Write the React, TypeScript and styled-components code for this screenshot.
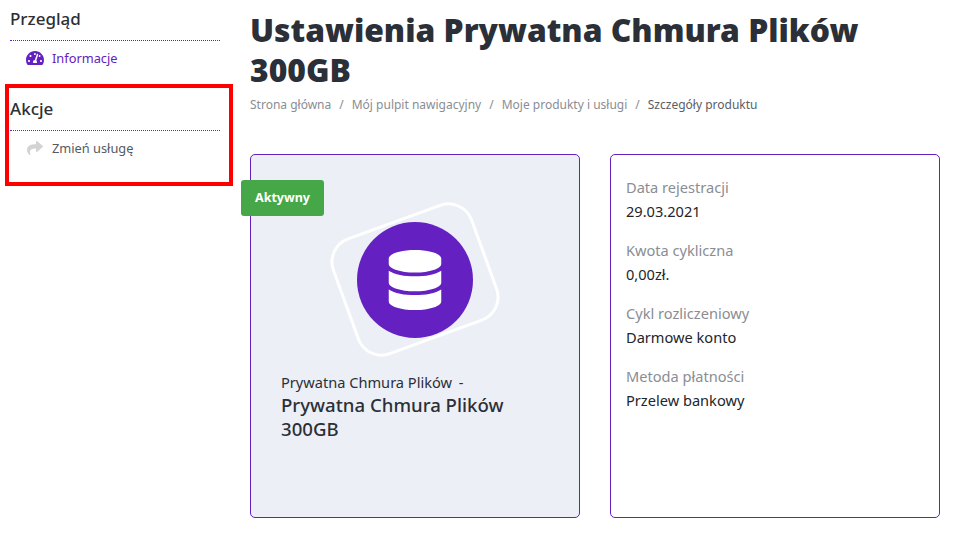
import { FaDatabase, FaShare, FaTachometerAlt } from 'react-icons/fa';
import styled, { createGlobalStyle } from 'styled-components';

const details = [
  { label: 'Data rejestracji', value: '29.03.2021' },
  { label: 'Kwota cykliczna', value: '0,00zł.' },
  { label: 'Cykl rozliczeniowy', value: 'Darmowe konto' },
  { label: 'Metoda płatności', value: 'Przelew bankowy' },
];

const crumbs = ['Strona główna', 'Mój pulpit nawigacyjny', 'Moje produkty i usługi'];

export default function App(): React.ReactElement {
  return (
    <Page>
      <GlobalStyle />
      <Sidebar>
        <SideSection>
          <SideTitle>Przegląd</SideTitle>
          <SideLink $active>
            <FaTachometerAlt size={18} className="icon" />
            Informacje
          </SideLink>
        </SideSection>
        <SideSection>
          <SideTitle>Akcje</SideTitle>
          <SideLink>
            <FaShare size={16} className="icon" />
            Zmień usługę
          </SideLink>
        </SideSection>
        <Highlight />
      </Sidebar>
      <Main>
        <Heading>Ustawienia Prywatna Chmura Plików 300GB</Heading>
        <Breadcrumb>
          {crumbs.map((crumb) => (
            <Crumb key={crumb}>
              {crumb}
              <Slash>/</Slash>
            </Crumb>
          ))}
          <Current>Szczegóły produktu</Current>
        </Breadcrumb>
        <Cards>
          <ProductCard>
            <Badge>Aktywny</Badge>
            <IconWrap>
              <Frame />
              <Circle>
                <FaDatabase size={60} />
              </Circle>
            </IconWrap>
            <ProductGroup>
              Prywatna Chmura Plików <Dash>-</Dash>
            </ProductGroup>
            <ProductName>Prywatna Chmura Plików 300GB</ProductName>
          </ProductCard>
          <InfoCard>
            {details.map((item) => (
              <InfoItem key={item.label}>
                <InfoLabel>{item.label}</InfoLabel>
                <InfoValue>{item.value}</InfoValue>
              </InfoItem>
            ))}
          </InfoCard>
        </Cards>
      </Main>
    </Page>
  );
}

const GlobalStyle = createGlobalStyle`
  body {
    margin: 0;
    background: #fff;
    font-family: "Noto Sans", "Open Sans", sans-serif;
    color: #2b2f38;
  }
`;

const Page = styled.div`
  display: flex;
  align-items: flex-start;
  width: 959px;
  height: 547px;
  overflow: hidden;
`;

const Sidebar = styled.aside`
  position: relative;
  flex: 0 0 250px;
  padding: 6px 30px 0 10px;
  box-sizing: border-box;
`;

const Highlight = styled.div`
  position: absolute;
  left: 5px;
  top: 84px;
  width: 228px;
  height: 102px;
  box-sizing: border-box;
  border: 4px solid #fe0000;
  pointer-events: none;
`;

const SideSection = styled.section`
  margin-bottom: 21px;
`;

const SideTitle = styled.h3`
  margin: 0;
  height: 34px;
  line-height: 26px;
  font-size: 17px;
  font-weight: 500;
  color: #2b2f38;
  border-bottom: 1px dotted #6420c0;
`;

const SideLink = styled.a<{ $active?: boolean }>`
  display: flex;
  align-items: center;
  height: 34px;
  padding-left: 16px;
  font-size: 12.8px;
  color: ${({ $active }) => ($active ? '#6420c0' : '#555a63')};

  & .icon {
    flex: 0 0 18px;
    margin-right: 8px;
    color: ${({ $active }) => ($active ? '#6420c0' : '#d3d3d3')};
  }
`;

const Main = styled.main`
  flex: 0 0 690px;
`;

const Heading = styled.h1`
  margin: 10px 0 0;
  font-size: 31.8px;
  line-height: 40px;
  font-weight: 900;
  color: #2b2f38;
`;

const Breadcrumb = styled.nav`
  display: flex;
  margin-top: 5px;
  height: 20px;
  line-height: 20px;
  font-size: 12px;
  color: #8a8d93;
`;

const Crumb = styled.span`
  white-space: pre;
`;

const Slash = styled.span`
  margin: 0 8px;
`;

const Current = styled.span`
  color: #5a5e66;
`;

const Cards = styled.div`
  display: flex;
  gap: 30px;
  margin-top: 39px;
`;

const Card = styled.section`
  box-sizing: border-box;
  width: 330px;
  height: 364px;
  border: 1px solid #6420c0;
  border-radius: 5px;
`;

const ProductCard = styled(Card)`
  position: relative;
  background: #eceff5;
  padding: 67px 30px 0;
`;

const Badge = styled.span`
  position: absolute;
  left: -10px;
  top: 25px;
  width: 83px;
  height: 36px;
  line-height: 36px;
  text-align: center;
  border-radius: 3px;
  background: #46a748;
  color: #fff;
  font-size: 12.5px;
  font-weight: 700;
`;

const IconWrap = styled.div`
  position: relative;
  display: flex;
  justify-content: center;
  width: 268px;
  height: 116px;
  margin-bottom: 33px;
`;

const Frame = styled.div`
  position: absolute;
  left: 59px;
  top: -5px;
  width: 150px;
  height: 125px;
  box-sizing: border-box;
  border: 3px solid #fff;
  border-radius: 26px;
  transform: rotate(-20deg);
`;

const Circle = styled.div`
  position: relative;
  display: flex;
  align-items: center;
  justify-content: center;
  width: 116px;
  height: 116px;
  border-radius: 50%;
  background: #6420c0;
  color: #fff;
`;

const ProductGroup = styled.div`
  font-size: 14.6px;
  line-height: 22px;
  color: #2b2f38;
`;

const Dash = styled.span`
  margin-left: 3px;
`;

const ProductName = styled.div`
  width: 240px;
  font-size: 18.6px;
  line-height: 24px;
  font-weight: 500;
  color: #2b2f38;
`;

const InfoCard = styled(Card)`
  padding: 20px 15px 0;
`;

const InfoItem = styled.div`
  margin-bottom: 15px;
`;

const InfoLabel = styled.div`
  font-size: 14.6px;
  line-height: 25px;
  color: #8a8d93;
`;

const InfoValue = styled.div`
  font-size: 14.6px;
  line-height: 23px;
  color: #22252c;
`;
